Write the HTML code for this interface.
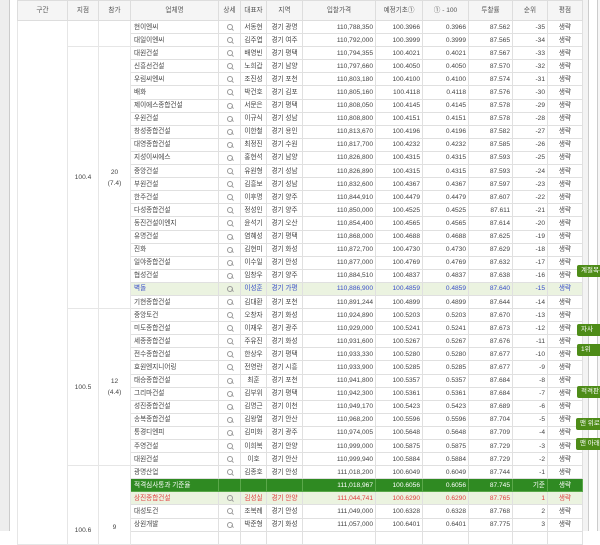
<!DOCTYPE html>
<html><head><meta charset="utf-8"><style>
*{margin:0;padding:0;box-sizing:border-box}
body{width:600px;height:531px;overflow:hidden;background:#fff;font-family:"Liberation Sans","Noto Sans CJK KR",sans-serif;font-size:6.6px;color:#444;position:relative}
.lg{position:absolute;left:0;top:0;width:10px;height:531px;background:#eee;border-right:1px solid #ccc}
.rs{position:absolute;left:582px;top:0;width:7px;height:531px;background:#f3f3f3;border-right:1px solid #ccc}
.rs2{position:absolute;left:597px;top:0;width:3px;height:531px;border-left:1px solid #ccc;background:#f6f6f6}
table{position:absolute;left:17px;top:0;border-collapse:collapse;table-layout:fixed;width:565px}
td,th{border:1px solid #e0e0e0;height:13.1px;line-height:11px;white-space:nowrap;overflow:hidden;padding:0 2px;text-align:right;font-weight:normal}
th{height:20px;background:#f5f5f5;text-align:center;color:#555;border-color:#ddd}
td.n{text-align:left;padding-left:3px}
td.c{text-align:center}
td.g{text-align:center;vertical-align:middle;border-color:#e6e6e6}
tr.hl td{background:#ebf3e0}
tr.bl td{color:#3a4fc8}
tr.rd td{color:#e04040}
tr.gr td{background:#2f8a22;color:#fff;border-color:#5aa84a}
td.q{position:relative}
td.q::after{content:"";position:absolute;left:8px;top:3px;width:4px;height:4px;border:1px solid #999;border-radius:50%}
td.q::before{content:"";position:absolute;left:12px;top:7.5px;width:3px;height:1px;background:#999;transform:rotate(45deg)}
.b{position:absolute;right:0;height:12px;background:#4e8c18;color:#fff;font-size:6.5px;line-height:12px;padding-left:4px;border-radius:2px 0 0 2px;overflow:hidden;white-space:nowrap}
</style></head><body>
<div class="lg"></div><div class="rs"></div><div class="rs2"></div>
<table>
<colgroup><col style="width:50px"><col style="width:31px"><col style="width:32px"><col style="width:88px"><col style="width:22px"><col style="width:26px"><col style="width:36px"><col style="width:73px"><col style="width:47px"><col style="width:46px"><col style="width:44px"><col style="width:35px"><col style="width:35px"></colgroup>
<tr><th>구간</th><th>지점</th><th>참가</th><th>업체명</th><th>상세</th><th>대표자</th><th>지역</th><th>입찰가격</th><th>예정기초①</th><th>① - 100</th><th>투찰률</th><th>순위</th><th>평점</th></tr>
<tr><td class="g" rowspan="40"></td><td class="g" rowspan="2"></td><td class="g" rowspan="2"></td><td class="n">현이엔씨</td><td class="q"></td><td class="c">서동현</td><td class="c">경기 광명</td><td>110,788,350</td><td>100.3966</td><td>0.3966</td><td>87.562</td><td>-35</td><td class="c">생략</td></tr>
<tr><td class="n">대일이엔씨</td><td class="q"></td><td class="c">김주엽</td><td class="c">경기 여주</td><td>110,792,000</td><td>100.3999</td><td>0.3999</td><td>87.565</td><td>-34</td><td class="c">생략</td></tr>
<tr><td class="g" rowspan="20">100.4</td><td class="g" rowspan="20">20<br>(7.4)</td><td class="n">대원건설</td><td class="q"></td><td class="c">배영빈</td><td class="c">경기 평택</td><td>110,794,355</td><td>100.4021</td><td>0.4021</td><td>87.567</td><td>-33</td><td class="c">생략</td></tr>
<tr><td class="n">신흥선건설</td><td class="q"></td><td class="c">노희갑</td><td class="c">경기 남양</td><td>110,797,660</td><td>100.4050</td><td>0.4050</td><td>87.570</td><td>-32</td><td class="c">생략</td></tr>
<tr><td class="n">우림씨엔씨</td><td class="q"></td><td class="c">조진성</td><td class="c">경기 포천</td><td>110,803,180</td><td>100.4100</td><td>0.4100</td><td>87.574</td><td>-31</td><td class="c">생략</td></tr>
<tr><td class="n">배화</td><td class="q"></td><td class="c">박건호</td><td class="c">경기 김포</td><td>110,805,160</td><td>100.4118</td><td>0.4118</td><td>87.576</td><td>-30</td><td class="c">생략</td></tr>
<tr><td class="n">제이에스종합건설</td><td class="q"></td><td class="c">서문은</td><td class="c">경기 평택</td><td>110,808,050</td><td>100.4145</td><td>0.4145</td><td>87.578</td><td>-29</td><td class="c">생략</td></tr>
<tr><td class="n">우원건설</td><td class="q"></td><td class="c">이규식</td><td class="c">경기 성남</td><td>110,808,800</td><td>100.4151</td><td>0.4151</td><td>87.578</td><td>-28</td><td class="c">생략</td></tr>
<tr><td class="n">창성종합건설</td><td class="q"></td><td class="c">이한철</td><td class="c">경기 용인</td><td>110,813,670</td><td>100.4196</td><td>0.4196</td><td>87.582</td><td>-27</td><td class="c">생략</td></tr>
<tr><td class="n">대영종합건설</td><td class="q"></td><td class="c">최정진</td><td class="c">경기 수원</td><td>110,817,700</td><td>100.4232</td><td>0.4232</td><td>87.585</td><td>-26</td><td class="c">생략</td></tr>
<tr><td class="n">지성이씨에스</td><td class="q"></td><td class="c">홍현석</td><td class="c">경기 남양</td><td>110,826,800</td><td>100.4315</td><td>0.4315</td><td>87.593</td><td>-25</td><td class="c">생략</td></tr>
<tr><td class="n">중앙건설</td><td class="q"></td><td class="c">유원형</td><td class="c">경기 성남</td><td>110,826,890</td><td>100.4315</td><td>0.4315</td><td>87.593</td><td>-24</td><td class="c">생략</td></tr>
<tr><td class="n">부원건설</td><td class="q"></td><td class="c">김흥보</td><td class="c">경기 성남</td><td>110,832,600</td><td>100.4367</td><td>0.4367</td><td>87.597</td><td>-23</td><td class="c">생략</td></tr>
<tr><td class="n">한주건설</td><td class="q"></td><td class="c">이후명</td><td class="c">경기 양주</td><td>110,844,910</td><td>100.4479</td><td>0.4479</td><td>87.607</td><td>-22</td><td class="c">생략</td></tr>
<tr><td class="n">다성종합건설</td><td class="q"></td><td class="c">정성인</td><td class="c">경기 양주</td><td>110,850,000</td><td>100.4525</td><td>0.4525</td><td>87.611</td><td>-21</td><td class="c">생략</td></tr>
<tr><td class="n">동진건설이엔지</td><td class="q"></td><td class="c">윤석기</td><td class="c">경기 오산</td><td>110,854,400</td><td>100.4565</td><td>0.4565</td><td>87.614</td><td>-20</td><td class="c">생략</td></tr>
<tr><td class="n">유명건설</td><td class="q"></td><td class="c">염혜성</td><td class="c">경기 평택</td><td>110,868,000</td><td>100.4688</td><td>0.4688</td><td>87.625</td><td>-19</td><td class="c">생략</td></tr>
<tr><td class="n">진화</td><td class="q"></td><td class="c">김현미</td><td class="c">경기 화성</td><td>110,872,700</td><td>100.4730</td><td>0.4730</td><td>87.629</td><td>-18</td><td class="c">생략</td></tr>
<tr><td class="n">일야종합건설</td><td class="q"></td><td class="c">이수일</td><td class="c">경기 안성</td><td>110,877,000</td><td>100.4769</td><td>0.4769</td><td>87.632</td><td>-17</td><td class="c">생략</td></tr>
<tr><td class="n">협성건설</td><td class="q"></td><td class="c">임창우</td><td class="c">경기 양주</td><td>110,884,510</td><td>100.4837</td><td>0.4837</td><td>87.638</td><td>-16</td><td class="c">생략</td></tr>
<tr class="hl bl"><td class="n">벽돌</td><td class="q"></td><td class="c">이성훈</td><td class="c">경기 가평</td><td>110,886,900</td><td>100.4859</td><td>0.4859</td><td>87.640</td><td>-15</td><td class="c">생략</td></tr>
<tr><td class="n">기현종합건설</td><td class="q"></td><td class="c">김대환</td><td class="c">경기 포천</td><td>110,891,244</td><td>100.4899</td><td>0.4899</td><td>87.644</td><td>-14</td><td class="c">생략</td></tr>
<tr><td class="g" rowspan="12">100.5</td><td class="g" rowspan="12">12<br>(4.4)</td><td class="n">중앙토건</td><td class="q"></td><td class="c">오창자</td><td class="c">경기 화성</td><td>110,924,890</td><td>100.5203</td><td>0.5203</td><td>87.670</td><td>-13</td><td class="c">생략</td></tr>
<tr><td class="n">미도종합건설</td><td class="q"></td><td class="c">이재우</td><td class="c">경기 광주</td><td>110,929,000</td><td>100.5241</td><td>0.5241</td><td>87.673</td><td>-12</td><td class="c">생략</td></tr>
<tr><td class="n">세종종합건설</td><td class="q"></td><td class="c">주유진</td><td class="c">경기 화성</td><td>110,931,600</td><td>100.5267</td><td>0.5267</td><td>87.676</td><td>-11</td><td class="c">생략</td></tr>
<tr><td class="n">전수종합건설</td><td class="q"></td><td class="c">한상우</td><td class="c">경기 평택</td><td>110,933,330</td><td>100.5280</td><td>0.5280</td><td>87.677</td><td>-10</td><td class="c">생략</td></tr>
<tr><td class="n">효원엔지니어링</td><td class="q"></td><td class="c">전영란</td><td class="c">경기 시흥</td><td>110,933,900</td><td>100.5285</td><td>0.5285</td><td>87.677</td><td>-9</td><td class="c">생략</td></tr>
<tr><td class="n">태승종합건설</td><td class="q"></td><td class="c">최훈</td><td class="c">경기 포천</td><td>110,941,800</td><td>100.5357</td><td>0.5357</td><td>87.684</td><td>-8</td><td class="c">생략</td></tr>
<tr><td class="n">그리마건설</td><td class="q"></td><td class="c">김부위</td><td class="c">경기 평택</td><td>110,942,300</td><td>100.5361</td><td>0.5361</td><td>87.684</td><td>-7</td><td class="c">생략</td></tr>
<tr><td class="n">성진종합건설</td><td class="q"></td><td class="c">김명근</td><td class="c">경기 이천</td><td>110,949,170</td><td>100.5423</td><td>0.5423</td><td>87.689</td><td>-6</td><td class="c">생략</td></tr>
<tr><td class="n">송복종합건설</td><td class="q"></td><td class="c">김왕열</td><td class="c">경기 안산</td><td>110,968,200</td><td>100.5596</td><td>0.5596</td><td>87.704</td><td>-5</td><td class="c">생략</td></tr>
<tr><td class="n">통경디엔피</td><td class="q"></td><td class="c">김미화</td><td class="c">경기 광주</td><td>110,974,005</td><td>100.5648</td><td>0.5648</td><td>87.709</td><td>-4</td><td class="c">생략</td></tr>
<tr><td class="n">주영건설</td><td class="q"></td><td class="c">이희복</td><td class="c">경기 안양</td><td>110,999,000</td><td>100.5875</td><td>0.5875</td><td>87.729</td><td>-3</td><td class="c">생략</td></tr>
<tr><td class="n">대원건설</td><td class="q"></td><td class="c">이호</td><td class="c">경기 안산</td><td>110,999,940</td><td>100.5884</td><td>0.5884</td><td>87.729</td><td>-2</td><td class="c">생략</td></tr>
<tr><td class="g" rowspan="6" style="vertical-align:top;padding-top:59px">100.6</td><td class="g" rowspan="6" style="vertical-align:top;padding-top:56px">9</td><td class="n">광명산업</td><td class="q"></td><td class="c">김종호</td><td class="c">경기 안성</td><td>111,018,200</td><td>100.6049</td><td>0.6049</td><td>87.744</td><td>-1</td><td class="c">생략</td></tr>
<tr class="gr"><td class="n">적격심사통과 기준율</td><td></td><td></td><td></td><td>111,018,967</td><td>100.6056</td><td>0.6056</td><td>87.745</td><td>기준</td><td class="c">생략</td></tr>
<tr class="hl rd"><td class="n">상진종합건설</td><td class="q"></td><td class="c">김성실</td><td class="c">경기 안양</td><td>111,044,741</td><td>100.6290</td><td>0.6290</td><td>87.765</td><td>1</td><td class="c">생략</td></tr>
<tr><td class="n">대성토건</td><td class="q"></td><td class="c">조복례</td><td class="c">경기 안성</td><td>111,049,000</td><td>100.6328</td><td>0.6328</td><td>87.768</td><td>2</td><td class="c">생략</td></tr>
<tr><td class="n">상원개발</td><td class="q"></td><td class="c">박준형</td><td class="c">경기 화성</td><td>111,057,000</td><td>100.6401</td><td>0.6401</td><td>87.775</td><td>3</td><td class="c">생략</td></tr>
<tr><td class="n"></td><td></td><td></td><td></td><td></td><td></td><td></td><td></td><td></td><td></td></tr>
</table>
<div class="b" style="top:265px;width:23px">계절목록</div>
<div class="b" style="top:324px;width:23px">자사</div>
<div class="b" style="top:344px;width:23px">1위</div>
<div class="b" style="top:386px;width:23px">적격판정</div>
<div class="b" style="top:418px;width:24px">맨 위로</div>
<div class="b" style="top:438px;width:24px">맨 아래</div>
</body></html>
